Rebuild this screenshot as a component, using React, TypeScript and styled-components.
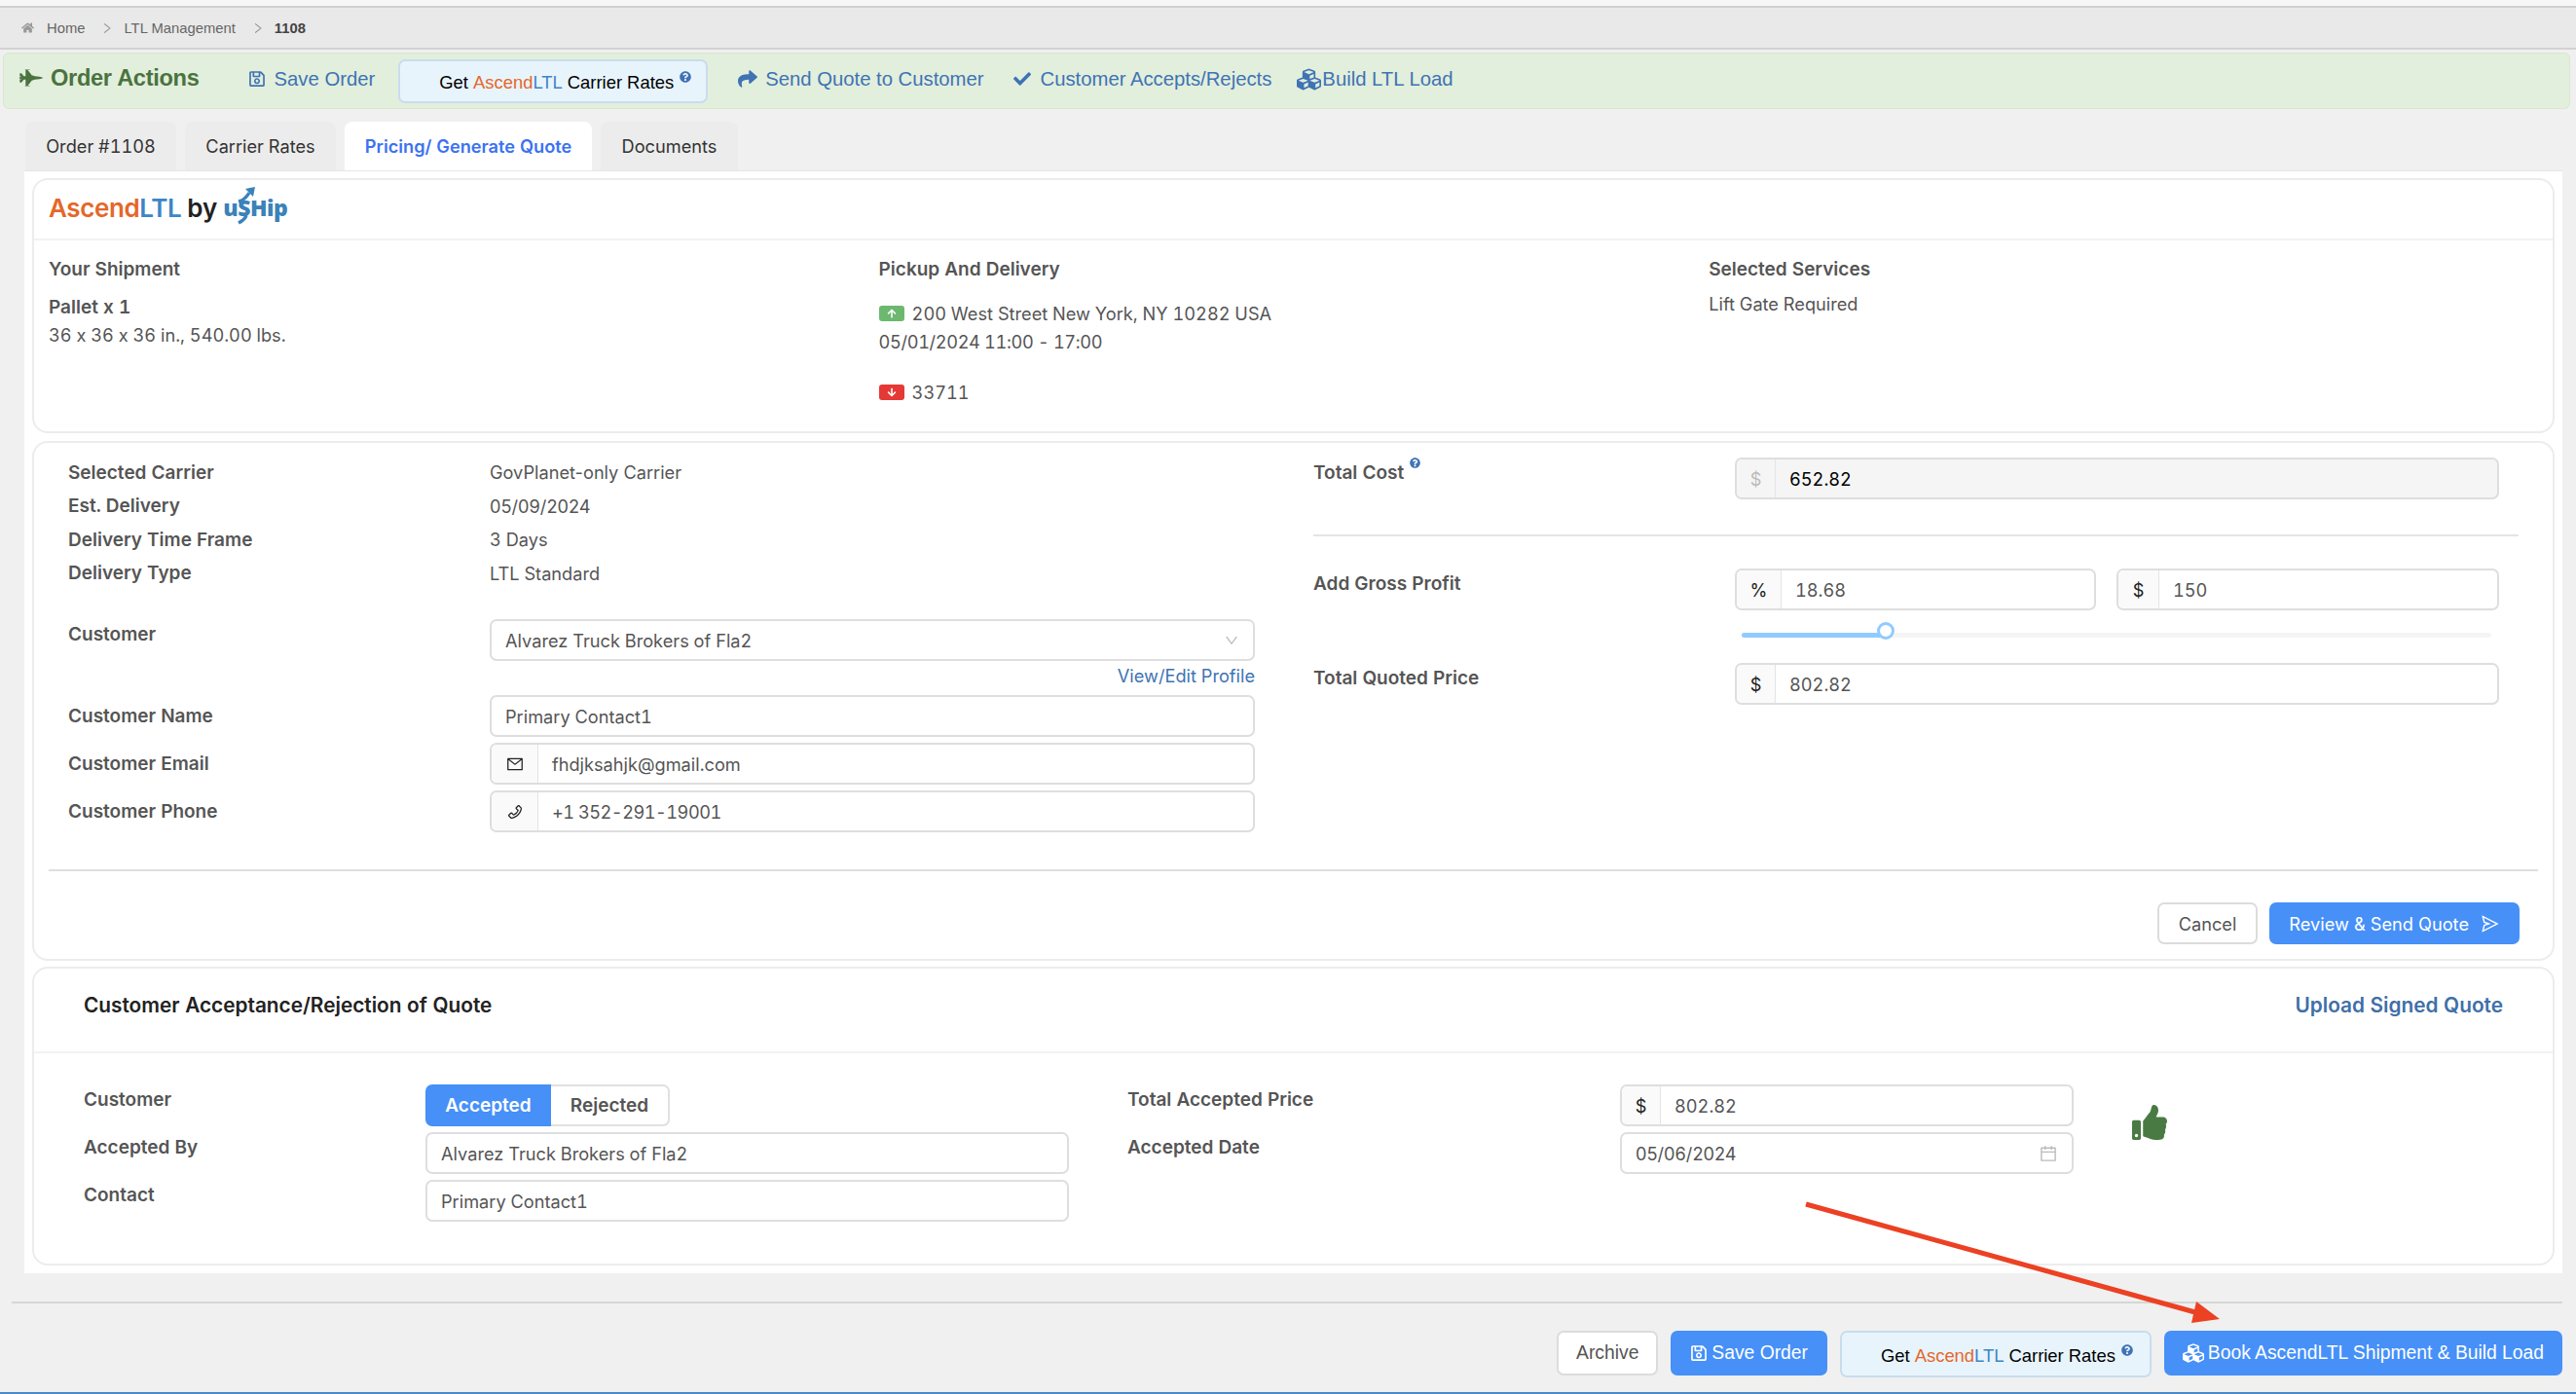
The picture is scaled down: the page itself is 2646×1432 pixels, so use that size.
import React from "react";
import styled, { createGlobalStyle } from "styled-components";
import {
  FaArrowDown,
  FaArrowUp,
  FaCheck,
  FaCubes,
  FaFighterJet,
  FaHome,
  FaQuestionCircle,
  FaRegSave,
  FaShare,
  FaThumbsUp,
} from "react-icons/fa";
import {
  AiOutlineCalendar,
  AiOutlineDown,
  AiOutlineMail,
  AiOutlinePhone,
  AiOutlineRight,
  AiOutlineSend,
} from "react-icons/ai";

const GlobalStyle = createGlobalStyle`
  html, body {
    margin: 0;
    padding: 0;
    background: #f0f0f0;
    font-family: Inter, "Liberation Sans", sans-serif;
    font-feature-settings: "calt" 0;
    font-variant-numeric: tabular-nums;
  }
  * { box-sizing: border-box; }
`;

const Page = styled.div`
  position: relative;
  width: 2646px;
  height: 1432px;
  overflow: hidden;
  background: #f0f0f0;
`;

const TopStrip = styled.div`
  height: 8px;
  background: #f7f7f7;
  border-bottom: 2px solid #d0d0d0;
`;

const Breadcrumb = styled.nav`
  display: flex;
  align-items: center;
  height: 43px;
  padding-left: 22px;
  background: #e9e9e9;
  border-bottom: 2px solid #d2d2d2;
  font-family: "Liberation Sans", sans-serif;
  font-size: 14.8px;
  color: #666;

  svg.home {
    width: 13px;
    height: 13px;
    color: #999;
    margin-right: 13px;
  }
  svg.sep {
    width: 14px;
    height: 14px;
    color: #999;
    margin: 0 10px 0 16px;
  }
  b {
    color: #444;
  }
`;

const ActionBar = styled.div`
  display: flex;
  align-items: center;
  height: 58px;
  margin: 3px 6px 0 3px;
  padding-left: 16px;
  background: #e2efdc;
  border: 1px solid #d8e8cf;
  border-radius: 6px;
  font-family: "Liberation Sans", sans-serif;
`;

const ActionTitle = styled.div`
  display: flex;
  align-items: center;
  gap: 8px;
  margin: -6px 50px 0 0;
  font-size: 23.6px;
  font-weight: 700;
  color: #4a7340;
  letter-spacing: -0.3px;

  svg {
    width: 24px;
    height: 24px;
  }
`;

const ActionLink = styled.a<{ $gap?: number; $after?: number; $before?: number }>`
  display: flex;
  align-items: center;
  gap: ${(p) => p.$gap ?? 10}px;
  margin: 0 ${(p) => p.$after ?? 30}px 4px ${(p) => p.$before ?? 0}px;
  font-size: 20.3px;
  color: #3f73b4;

  svg {
    flex: none;
  }
`;

const RatesButton = styled.div<{ $tall?: boolean; $right: number }>`
  display: flex;
  align-items: center;
  height: ${(p) => (p.$tall ? 48 : 45)}px;
  padding: ${(p) => (p.$tall ? "4px" : "3px")} ${(p) => p.$right}px 0 40px;
  background: #e8f4fc;
  border: 2px solid #c9dcee;
  border-radius: 7px;
  font-family: "Liberation Sans", sans-serif;
  font-size: 18.4px;
  color: #000;
  white-space: pre;
`;

const Ascend = styled.span`
  color: #e5672a;
`;

const Ltl = styled.span`
  color: #3d85c6;
`;

const Help = styled(FaQuestionCircle)<{ $size?: number }>`
  width: ${(p) => p.$size ?? 12}px;
  height: ${(p) => p.$size ?? 12}px;
  margin: 0 0 12px 6px;
  color: #3f73b4;
  flex: none;
`;

const Tabs = styled.div`
  display: flex;
  gap: 9px;
  margin-top: 13px;
  padding-left: 26px;
`;

const Tab = styled.div<{ $active?: boolean; $width: number }>`
  display: flex;
  align-items: center;
  justify-content: center;
  width: ${(p) => p.$width}px;
  height: 50px;
  background: ${(p) => (p.$active ? "#fff" : "#ececec")};
  border-radius: 8px 8px 0 0;
  font-size: 18.2px;
  font-weight: ${(p) => (p.$active ? 600 : 400)};
  color: ${(p) => (p.$active ? "#3b72f2" : "#333")};
`;

const TabPanel = styled.div`
  display: flex;
  flex-direction: column;
  width: 2607px;
  margin-left: 25px;
  padding: 7px 8px 8px;
  background: #fff;
  border-top: 1px solid #e6e6e6;
`;

const Card = styled.section<{ $below?: number }>`
  width: 2591px;
  margin-bottom: ${(p) => p.$below ?? 0}px;
  background: #fff;
  border: 2px solid #ececec;
  border-radius: 16px;
  font-size: 18.2px;
  color: #555;
`;

const LogoRow = styled.div`
  display: flex;
  align-items: center;
  height: 62px;
  padding: 0 0 4px 15px;
  border-bottom: 2px solid #f2f2f2;
`;

const LogoText = styled.span`
  font-size: 26px;
  font-weight: 600;
  letter-spacing: -0.4px;
`;

const By = styled.span`
  margin-left: 6px;
  font-size: 26px;
  font-weight: 600;
  color: #222;
`;

const UShip = styled.span`
  position: relative;
  margin-left: 6px;
  font-family: "Open Sans", sans-serif;
  font-size: 23px;
  font-weight: 800;
  letter-spacing: -0.5px;
  color: #3b82b9;

  svg {
    position: absolute;
    left: 12px;
    top: -6px;
    width: 22px;
    height: 42px;
  }
`;

const ShipmentGrid = styled.div`
  display: grid;
  grid-template-columns: repeat(3, 852.6px);
  height: 196px;
  padding: 17px 0 0 15px;
  line-height: 26px;
`;

const Heading = styled.div`
  font-size: 19px;
  font-weight: 600;
`;

const Line = styled.div<{ $top: number; $strong?: boolean }>`
  display: flex;
  align-items: center;
  margin-top: ${(p) => p.$top}px;
  font-size: ${(p) => (p.$strong ? 19 : 18.2)}px;
  font-weight: ${(p) => (p.$strong ? 600 : 400)};
`;

const StopBadge = styled.span<{ $color: string }>`
  display: inline-flex;
  align-items: center;
  justify-content: center;
  width: 26px;
  height: 16px;
  margin-right: 8px;
  background: ${(p) => p.$color};
  border-radius: 3px;
  color: #fff;

  svg {
    width: 10px;
    height: 10px;
  }
`;

const Tight = styled.span<{ $spacing?: number }>`
  letter-spacing: ${(p) => p.$spacing ?? -0.4}px;
`;

const Plain = styled.span`
  font-variant-numeric: normal;
`;

const QuoteGrid = styled.div`
  display: grid;
  grid-template-columns: 1218px 1238px;
  column-gap: 61px;
  padding: 13px 0 0 35px;
`;

const RightColumn = styled.div`
  padding-top: 2px;
`;

const InfoRow = styled.div`
  display: grid;
  grid-template-columns: 433px 1fr;
  align-items: center;
  height: 34.5px;
`;

const Label = styled.div<{ $center?: boolean }>`
  align-self: ${(p) => (p.$center ? "center" : "start")};
  line-height: 31px;
  font-size: 19px;
  font-weight: 600;
  color: #555;

  sup {
    display: inline-block;
    vertical-align: top;
    line-height: 22px;
  }
`;

const FieldRow = styled.div<{ $columns: string; $top?: number }>`
  display: grid;
  grid-template-columns: ${(p) => p.$columns};
  margin-top: ${(p) => p.$top ?? 0}px;
`;

const Field = styled.div<{ $disabled?: boolean }>`
  display: flex;
  align-items: stretch;
  height: 43px;
  background: ${(p) => (p.$disabled ? "#f5f5f5" : "#fff")};
  border: 2px solid #dedede;
  border-radius: 7px;
  overflow: hidden;
  color: ${(p) => (p.$disabled ? "#000" : "#555")};
`;

const Prefix = styled.div<{ $width?: number; $muted?: boolean }>`
  display: flex;
  align-items: center;
  justify-content: center;
  flex: none;
  width: ${(p) => p.$width ?? 40}px;
  background: ${(p) => (p.$muted ? "#f5f5f5" : "#fafafa")};
  border-right: 1px solid #e4e4e4;
  color: ${(p) => (p.$muted ? "#bbb" : "#222")};

  svg {
    width: 18px;
    height: 18px;
  }
`;

const Value = styled.div`
  display: flex;
  align-items: center;
  justify-content: space-between;
  flex: 1;
  padding: 0 14px;

  svg {
    color: #bbb;
  }
`;

const ProfileLink = styled.a`
  display: block;
  height: 29px;
  padding-top: 3px;
  line-height: 24px;
  text-align: right;
  color: #3f73b4;
`;

const ThinRule = styled.div`
  height: 2px;
  margin: 36px 0 33px;
  background: #e4e4e4;
`;

const PairRow = styled.div`
  display: grid;
  grid-template-columns: 371px 393px;
  column-gap: 21px;
`;

const SliderBox = styled.div`
  position: relative;
  height: 22px;
  margin: 14px 28px 18px 440px;
`;

const SliderTrack = styled.div`
  position: absolute;
  left: 0;
  right: 0;
  top: 9px;
  height: 5px;
  background: #f5f5f5;
  border-radius: 3px;
`;

const SliderFill = styled.div`
  position: absolute;
  left: 0;
  top: 9px;
  height: 5px;
  background: #91caff;
  border-radius: 3px;
`;

const SliderThumb = styled.div`
  position: absolute;
  top: -2px;
  width: 18px;
  height: 18px;
  margin-left: -9px;
  background: #fff;
  border: 3px solid #91caff;
  border-radius: 50%;
`;

const WideRule = styled.div`
  height: 2px;
  margin: 38px 15px 32px 15px;
  background: #dedede;
`;

const ButtonRow = styled.div`
  display: flex;
  justify-content: flex-end;
  gap: 12px;
  padding: 0 34px 15px 0;
`;

const Button = styled.button<{ $primary?: boolean; $pad?: number; $gap?: number }>`
  display: flex;
  align-items: center;
  justify-content: center;
  gap: ${(p) => p.$gap ?? 6}px;
  height: ${(p) => (p.$pad ? 46 : 43)}px;
  padding: 0 ${(p) => p.$pad ?? 20}px;
  background: ${(p) => (p.$primary ? "#4690f8" : "#fff")};
  border: ${(p) => (p.$primary ? "none" : "2px solid #dcdcdc")};
  border-radius: 7px;
  font-family: inherit;
  font-size: 18.2px;
  color: ${(p) => (p.$primary ? "#fff" : "#555")};
`;

const AcceptHeader = styled.div`
  display: flex;
  justify-content: space-between;
  height: 87px;
  padding: 20px 51px 0;
  border-bottom: 2px solid #f2f2f2;
  line-height: 36px;
  font-size: 20.8px;
  font-weight: 600;
`;

const AcceptTitle = styled.div`
  color: #222;
`;

const UploadLink = styled.a`
  color: #3f6fa8;
`;

const AcceptBody = styled.div`
  display: grid;
  grid-template-columns: 1012px 972px auto;
  column-gap: 60px;
  padding: 32px 0 43px 51px;
`;

const Stack = styled.div`
  display: flex;
  flex-direction: column;
  gap: 6px;
`;

const Segments = styled.div`
  display: flex;
  height: 43px;
`;

const Segment = styled.div<{ $on?: boolean; $width: number }>`
  display: flex;
  align-items: center;
  justify-content: center;
  width: ${(p) => p.$width}px;
  font-size: 19px;
  font-weight: 600;
  background: ${(p) => (p.$on ? "#4690f8" : "#fff")};
  border: ${(p) => (p.$on ? "none" : "2px solid #e0e0e0")};
  border-left: none;
  border-radius: ${(p) => (p.$on ? "7px 0 0 7px" : "0 7px 7px 0")};
  color: ${(p) => (p.$on ? "#fff" : "#555")};
`;

const ThumbIcon = styled(FaThumbsUp)`
  width: 36px;
  height: 36px;
  margin-top: 21px;
  color: #4a7a44;
`;

const FooterRule = styled.div`
  height: 2px;
  margin: 29px 14px 0 12px;
  background: #d6d6d6;
`;

const FooterBar = styled.div`
  display: flex;
  justify-content: flex-end;
  align-items: flex-start;
  gap: 13px;
  margin-top: 28px;
  padding-right: 14px;
  font-family: "Liberation Sans", sans-serif;

  ${Button} {
    font-family: "Liberation Sans", sans-serif;
    font-size: 19.3px;
    gap: 4px;
  }
`;

const BottomLine = styled.div`
  height: 2px;
  margin-top: 15px;
  background: #4a8ac8;
`;

const ArrowOverlay = styled.svg`
  position: absolute;
  left: 0;
  top: 0;
  width: 2646px;
  height: 1432px;
  pointer-events: none;
`;

const RatesLabel: React.FC = () => (
  <>
    Get <Ascend>Ascend</Ascend>
    <Ltl>LTL</Ltl> Carrier Rates
    <Help />
  </>
);

const sliderValue = 19.2;

const App: React.FC = () => {
  return (
    <Page>
      <GlobalStyle />
      <TopStrip />
      <Breadcrumb>
        <FaHome className="home" />
        Home
        <AiOutlineRight className="sep" />
        LTL Management
        <AiOutlineRight className="sep" />
        <b>1108</b>
      </Breadcrumb>

      <ActionBar>
        <ActionTitle>
          <FaFighterJet />
          Order Actions
        </ActionTitle>
        <ActionLink $gap={9} $after={24}>
          <FaRegSave size={18} />
          Save Order
        </ActionLink>
        <RatesButton $right={15}>
          <RatesLabel />
        </RatesButton>
        <ActionLink $gap={8} $after={30} $before={31}>
          <FaShare size={20} />
          Send Quote to Customer
        </ActionLink>
        <ActionLink $after={26}>
          <FaCheck size={18} />
          Customer Accepts/Rejects
        </ActionLink>
        <ActionLink $gap={1}>
          <FaCubes size={25} />
          Build LTL Load
        </ActionLink>
      </ActionBar>

      <Tabs>
        <Tab $width={155}>Order #1108</Tab>
        <Tab $width={155}>Carrier Rates</Tab>
        <Tab $width={254} $active>
          Pricing/ Generate Quote
        </Tab>
        <Tab $width={141}>Documents</Tab>
      </Tabs>

      <TabPanel>
        <Card $below={8}>
          <LogoRow>
            <LogoText>
              <Ascend>Ascend</Ascend>
              <Ltl>LTL</Ltl>
            </LogoText>
            <By>by</By>
            <UShip>
              uSHip
              <svg viewBox="0 0 22 42" fill="none" stroke="#3b82b9" strokeWidth="3.4">
                <path d="M4 16 C8 15 12 12 15 7" />
                <path d="M11 3 L21 1 L19 11 Z" fill="#3b82b9" stroke="none" />
                <path d="M12 30 C11 34 8 36 4 38" />
              </svg>
            </UShip>
          </LogoRow>
          <ShipmentGrid>
            <div>
              <Heading>Your Shipment</Heading>
              <Line $top={13} $strong>
                Pallet x 1
              </Line>
              <Line $top={2}>36 x 36 x 36 in., 540.00 lbs.</Line>
            </div>
            <div>
              <Heading>Pickup And Delivery</Heading>
              <Line $top={19}>
                <StopBadge $color="#6db86f">
                  <FaArrowUp />
                </StopBadge>
                200 West Street New York, NY 10282 USA
              </Line>
              <Line $top={3}>
                <Tight $spacing={-0.35}>05/01/2024 11:00 - 17:00</Tight>
              </Line>
              <Line $top={26}>
                <StopBadge $color="#e53935">
                  <FaArrowDown />
                </StopBadge>
                33711
              </Line>
            </div>
            <div>
              <Heading>Selected Services</Heading>
              <Line $top={9}>Lift Gate Required</Line>
            </div>
          </ShipmentGrid>
        </Card>

        <Card $below={6}>
          <QuoteGrid>
            <div>
              <InfoRow>
                <Label $center>Selected Carrier</Label>
                <Plain>GovPlanet-only Carrier</Plain>
              </InfoRow>
              <InfoRow>
                <Label $center>Est. Delivery</Label>
                <Plain>05/09/2024</Plain>
              </InfoRow>
              <InfoRow>
                <Label $center>Delivery Time Frame</Label>
                <div>3 Days</div>
              </InfoRow>
              <InfoRow>
                <Label $center>Delivery Type</Label>
                <div>LTL Standard</div>
              </InfoRow>
              <FieldRow $columns="433px 786px" $top={30}>
                <Label>Customer</Label>
                <Field>
                  <Value>
                    Alvarez Truck Brokers of Fla2
                    <AiOutlineDown size={16} />
                  </Value>
                </Field>
              </FieldRow>
              <FieldRow $columns="433px 786px">
                <span />
                <ProfileLink>View/Edit Profile</ProfileLink>
              </FieldRow>
              <FieldRow $columns="433px 786px" $top={6}>
                <Label $center>Customer Name</Label>
                <Field>
                  <Value>Primary Contact1</Value>
                </Field>
              </FieldRow>
              <FieldRow $columns="433px 786px" $top={6}>
                <Label $center>Customer Email</Label>
                <Field>
                  <Prefix $width={48}>
                    <AiOutlineMail />
                  </Prefix>
                  <Value>fhdjksahjk@gmail.com</Value>
                </Field>
              </FieldRow>
              <FieldRow $columns="433px 786px" $top={6}>
                <Label $center>Customer Phone</Label>
                <Field>
                  <Prefix $width={48}>
                    <AiOutlinePhone />
                  </Prefix>
                  <Value>
                    <Tight $spacing={-0.5}>+1 352-291-19001</Tight>
                  </Value>
                </Field>
              </FieldRow>
            </div>

            <RightColumn>
              <FieldRow $columns="433px 785px">
                <Label>
                  Total Cost
                  <sup>
                    <Help $size={11} />
                  </sup>
                </Label>
                <Field $disabled>
                  <Prefix $muted>$</Prefix>
                  <Value>652.82</Value>
                </Field>
              </FieldRow>
              <ThinRule />
              <FieldRow $columns="433px 785px">
                <Label>Add Gross Profit</Label>
                <PairRow>
                  <Field>
                    <Prefix $width={46}>%</Prefix>
                    <Value>18.68</Value>
                  </Field>
                  <Field>
                    <Prefix $width={42}>$</Prefix>
                    <Value>150</Value>
                  </Field>
                </PairRow>
              </FieldRow>
              <SliderBox>
                <SliderTrack />
                <SliderFill style={{ width: `${sliderValue}%` }} />
                <SliderThumb style={{ left: `${sliderValue}%` }} />
              </SliderBox>
              <FieldRow $columns="433px 785px">
                <Label>Total Quoted Price</Label>
                <Field>
                  <Prefix>$</Prefix>
                  <Value>802.82</Value>
                </Field>
              </FieldRow>
            </RightColumn>
          </QuoteGrid>

          <WideRule />
          <ButtonRow>
            <Button>Cancel</Button>
            <Button $primary $gap={12}>
              Review &amp; Send Quote
              <AiOutlineSend size={20} />
            </Button>
          </ButtonRow>
        </Card>

        <Card>
          <AcceptHeader>
            <AcceptTitle>Customer Acceptance/Rejection of Quote</AcceptTitle>
            <UploadLink>Upload Signed Quote</UploadLink>
          </AcceptHeader>
          <AcceptBody>
            <Stack>
              <FieldRow $columns="351px 661px">
                <Label>Customer</Label>
                <Segments>
                  <Segment $on $width={129}>
                    Accepted
                  </Segment>
                  <Segment $width={122}>Rejected</Segment>
                </Segments>
              </FieldRow>
              <FieldRow $columns="351px 661px">
                <Label>Accepted By</Label>
                <Field>
                  <Value>Alvarez Truck Brokers of Fla2</Value>
                </Field>
              </FieldRow>
              <FieldRow $columns="351px 661px">
                <Label>Contact</Label>
                <Field>
                  <Value>Primary Contact1</Value>
                </Field>
              </FieldRow>
            </Stack>
            <Stack>
              <FieldRow $columns="506px 466px">
                <Label>Total Accepted Price</Label>
                <Field>
                  <Prefix>$</Prefix>
                  <Value>802.82</Value>
                </Field>
              </FieldRow>
              <FieldRow $columns="506px 466px">
                <Label>Accepted Date</Label>
                <Field>
                  <Value>
                    <Plain>05/06/2024</Plain>
                    <AiOutlineCalendar size={20} />
                  </Value>
                </Field>
              </FieldRow>
            </Stack>
            <ThumbIcon />
          </AcceptBody>
        </Card>
      </TabPanel>

      <FooterRule />
      <FooterBar>
        <Button $pad={18}>Archive</Button>
        <Button $primary $pad={20}>
          <FaRegSave size={18} />
          Save Order
        </Button>
        <RatesButton $tall $right={17}>
          <RatesLabel />
        </RatesButton>
        <Button $primary $pad={19}>
          <FaCubes size={22} />
          Book AscendLTL Shipment &amp; Build Load
        </Button>
      </FooterBar>
      <BottomLine />

      <ArrowOverlay viewBox="0 0 2646 1432">
        <line x1="1855" y1="1237" x2="2262" y2="1350" stroke="#ec4123" strokeWidth="5" />
        <polygon points="2256,1337 2280,1355 2251,1359" fill="#ec4123" />
      </ArrowOverlay>
    </Page>
  );
};

export default App;
